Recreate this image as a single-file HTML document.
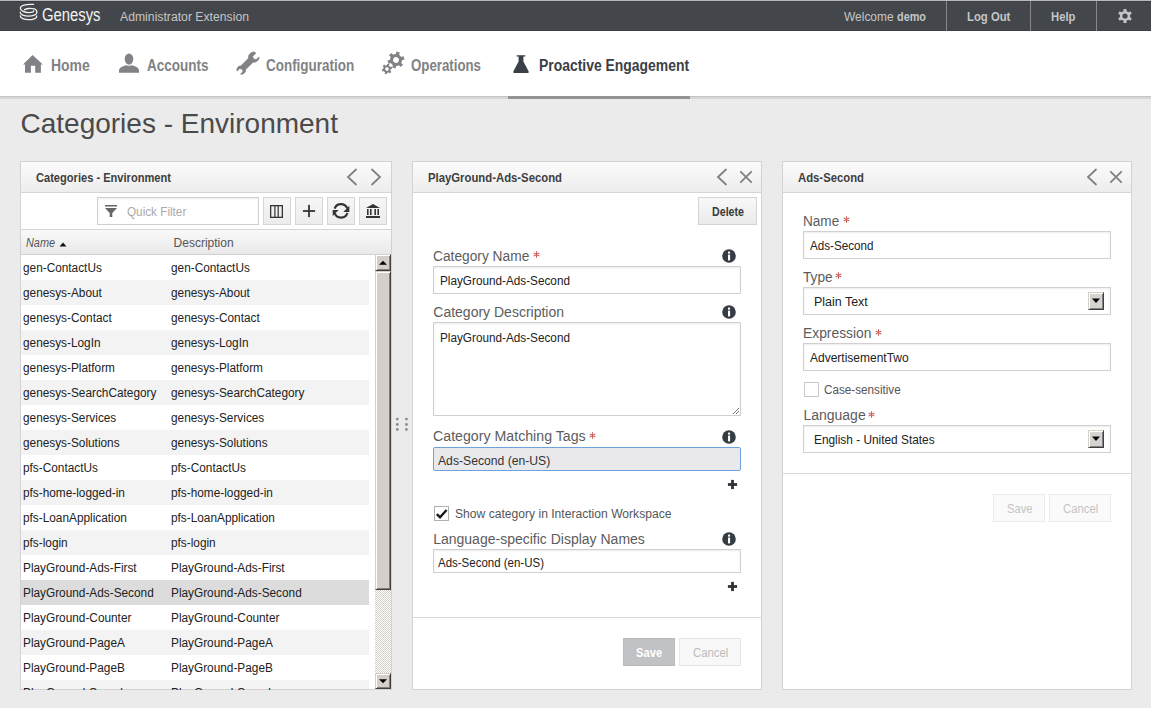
<!DOCTYPE html>
<html><head><meta charset="utf-8">
<style>
*{box-sizing:border-box;margin:0;padding:0}
html,body{width:1151px;height:708px;overflow:hidden;background:#ebebeb;font-family:"Liberation Sans",sans-serif;color:#333;position:relative}
.b{position:absolute}
.t{position:absolute;white-space:nowrap;transform-origin:0 0;font-family:"Liberation Sans",sans-serif}
svg{position:absolute;overflow:visible}
#top{left:0;top:0;width:1151px;height:31px;background:linear-gradient(#3c3d41 0,#3c3d41 1px,#43464a 1px);border-top:1px solid #b9babe;border-bottom:1px solid #3a3c3f}
.sep{top:1px;width:1px;height:30px;background:#85878a}
#nav{left:0;top:31px;width:1151px;height:65px;background:#fff}
#navline{left:0;top:96px;width:1151px;height:3px;background:linear-gradient(#c6c6c6 33%,#d6d6d6 33%)}
#navact{left:508px;top:96px;width:182px;height:3px;background:#939393}
.panel{top:161px;height:529px;background:#fff;border:1px solid #d2d2d2}
.phead{left:0;top:0;right:0;height:31px;background:linear-gradient(#fbfbfb,#ededed);border-bottom:1px solid #d5d5d5}
.inp{background:#fff;border:1px solid #d0d0d0;box-shadow:inset 0 1px 2px rgba(0,0,0,.08)}
.tbtn{top:197px;width:28px;height:28px;background:linear-gradient(#f6f6f6,#ececec);border:1px solid #d6d6d6}
.row{left:1px;width:348px;height:25px}
.alt{background:#f3f3f3}
.w3d{background:#d4d0c8;border-top:1px solid #fff;border-left:1px solid #fff;border-right:1px solid #404040;border-bottom:1px solid #404040;box-shadow:inset -1px -1px 0 #808080}
.dd{background:#d6d4d0;border-top:1px solid #d4d0c8;border-left:1px solid #d4d0c8;border-right:1px solid #404040;border-bottom:1px solid #404040;box-shadow:inset 1px 1px 0 #fff,inset -1px -1px 0 #808080}
</style></head><body>
<!-- top bar -->
<div id="top" class="b"></div>
<div class="b sep" style="left:946px"></div>
<div class="b sep" style="left:1030px"></div>
<div class="b sep" style="left:1096px"></div>
<!-- genesys logo -->
<svg style="left:18px;top:2px" width="22" height="22" viewBox="0 0 708 708">
  <g fill="none" stroke="#f0f0f0" stroke-width="42" stroke-linecap="round">
  <path d="M500 78 C250 60 75 110 75 195 C75 290 220 340 340 340 C450 340 510 320 505 290"/>
  <path d="M205 250 C260 205 420 195 520 225 C600 250 615 300 600 340"/>
  <path d="M72 330 C70 410 200 455 340 455 C480 455 610 415 605 335"/>
  <path d="M72 445 C70 525 200 570 340 570 C480 570 610 530 605 450"/>
  </g>
</svg>
<!-- top gear -->
<svg style="left:1117px;top:8px" width="16" height="16" viewBox="-8 -8 16 16">
  <g fill="#c2c4c6">
    <circle r="5.1"/>
    <rect x="-1.5" y="-7.1" width="3" height="14.2" rx="0.6"/>
    <rect x="-1.5" y="-7.1" width="3" height="14.2" rx="0.6" transform="rotate(60)"/>
    <rect x="-1.5" y="-7.1" width="3" height="14.2" rx="0.6" transform="rotate(120)"/>
  </g>
  <circle r="2.6" fill="#43464a"/>
</svg>
<!-- nav -->
<div id="nav" class="b"></div>
<div id="navline" class="b"></div>
<div id="navact" class="b"></div>
<!-- home -->
<svg style="left:22px;top:54px" width="22" height="20" viewBox="0 0 22 20">
  <path d="M10.6 1 L1 10.6 L3 10.6 L3 18.8 L8.9 18.8 L8.9 11.8 L13.2 11.8 L13.2 18.8 L18.9 18.8 L18.9 10.6 L20.8 10.6 Z" fill="#808285"/>
</svg>
<!-- person -->
<svg style="left:118px;top:52px" width="22" height="22" viewBox="0 0 22 22">
  <ellipse cx="11" cy="7.1" rx="4.3" ry="5.6" fill="#808285"/>
  <path d="M1 20.8 L1 19 C1 16 3.5 14.8 7 13.6 L8.5 13.2 C9.5 14 12.5 14 13.5 13.2 L15 13.6 C18.5 14.8 21 16 21 19 L21 20.8 Z" fill="#808285"/>
</svg>
<!-- wrench -->
<svg style="left:236px;top:51px" width="24" height="24" viewBox="0 0 24 24">
  <path d="M17.8 1 C14.6 1.2 12.2 3.8 12.6 7.2 L4.8 15 C1.8 14.8 0.6 17.4 1 20 L3.8 17.6 L6.4 18.2 L7 20.6 L4.6 23.2 C7.6 23.4 9.8 21.6 9.6 18.6 L17 11.2 C20.4 11.6 23.2 9.2 23 6 L20.2 8.6 L17.4 8 L16.6 5.2 L19.8 2.2 C19.2 1.4 18.6 1 17.8 1 Z" fill="#808285" stroke="#808285" stroke-width="0.8" stroke-linejoin="round"/>
</svg>
<!-- gears -->
<svg style="left:380px;top:50px" width="26" height="26" viewBox="0 0 26 26">
  <g transform="translate(16 10) rotate(15)" fill="#808285">
    <circle r="6"/>
    <rect x="-1.7" y="-8.3" width="3.4" height="16.6"/>
    <rect x="-1.7" y="-8.3" width="3.4" height="16.6" transform="rotate(60)"/>
    <rect x="-1.7" y="-8.3" width="3.4" height="16.6" transform="rotate(120)"/>
    <circle r="2.9" fill="#fff"/>
  </g>
  <g transform="translate(7 19) rotate(15)" fill="#808285">
    <circle r="3.7"/>
    <rect x="-1.1" y="-5.1" width="2.2" height="10.2"/>
    <rect x="-1.1" y="-5.1" width="2.2" height="10.2" transform="rotate(60)"/>
    <rect x="-1.1" y="-5.1" width="2.2" height="10.2" transform="rotate(120)"/>
    <circle r="1.8" fill="#fff"/>
  </g>
</svg>
<!-- flask -->
<svg style="left:512px;top:54px" width="18" height="20" viewBox="0 0 18 20">
  <path d="M5 1.2 L13 1.2 C13.6 1.2 13.6 2.6 13 2.6 L11.4 2.6 L11.4 7.6 L16.6 17.2 C17 18.2 16.6 19 15.6 19 L2.4 19 C1.4 19 1 18.2 1.4 17.2 L6.6 7.6 L6.6 2.6 L5 2.6 C4.4 2.6 4.4 1.2 5 1.2 Z" fill="#3b4046"/>
</svg>

<!-- panel 1 -->
<div class="b panel" style="left:20px;width:372px">
  <div class="b phead"></div>
  <div class="b" style="left:0;top:31px;width:370px;height:37px;border-bottom:1px solid #d6d6d6;background:#fff"></div>
  <div class="b" style="left:0;top:68px;width:370px;height:25px;background:linear-gradient(#f9f9f9,#e9e9e9);border-bottom:1px solid #d0d0d0"></div>
</div>
<div class="b inp" style="left:97px;top:197px;width:162px;height:28px"></div>
<div class="b tbtn" style="left:263px"></div>
<div class="b tbtn" style="left:295px"></div>
<div class="b tbtn" style="left:327px"></div>
<div class="b tbtn" style="left:359px"></div>
<!-- header arrows p1 -->
<svg style="left:345px;top:168px" width="14" height="18" viewBox="0 0 14 18"><path d="M11 1.5 L3 9 L11 16.5" fill="none" stroke="#808080" stroke-width="1.8" stroke-linecap="round"/></svg>
<svg style="left:369px;top:168px" width="14" height="18" viewBox="0 0 14 18"><path d="M3 1.5 L11 9 L3 16.5" fill="none" stroke="#808080" stroke-width="1.8" stroke-linecap="round"/></svg>
<!-- funnel -->
<svg style="left:104px;top:204px" width="14" height="14" viewBox="0 0 14 14"><rect x="1" y="1" width="12" height="1.5" fill="#666"/><path d="M1 4 L13 4 L8.3 9 L8.3 13 L5.7 13 L5.7 9 Z" fill="#666"/></svg>
<!-- columns -->
<svg style="left:269px;top:204px" width="16" height="16" viewBox="0 0 16 16"><rect x="1.65" y="1.65" width="11.7" height="11.7" fill="none" stroke="#333" stroke-width="1.3"/><rect x="5.3" y="2" width="1.2" height="11" fill="#333"/><rect x="8.6" y="2" width="1.2" height="11" fill="#333"/></svg>
<!-- plus -->
<svg style="left:302px;top:204px" width="14" height="14" viewBox="0 0 14 14"><rect x="0.9" y="6.1" width="12.2" height="1.8" fill="#333"/><rect x="6.1" y="0.9" width="1.8" height="12.2" fill="#333"/></svg>
<!-- refresh -->
<svg style="left:332px;top:203px" width="18" height="16" viewBox="0 0 18 16">
  <path d="M2.6 5.6 A6.7 6.7 0 0 1 15.2 5.4" fill="none" stroke="#333" stroke-width="2.1"/>
  <path d="M15.4 10 A6.7 6.7 0 0 1 2.8 10.4" fill="none" stroke="#333" stroke-width="2.1"/>
  <path d="M17.3 2.8 L17.3 8.9 L11.4 8.9 Z" fill="#333"/>
  <path d="M0.7 13 L0.7 6.9 L6.6 6.9 Z" fill="#333"/>
</svg>
<!-- bank -->
<svg style="left:365px;top:203px" width="16" height="16" viewBox="0 0 16 16">
  <path d="M8 1 L15 5 L1 5 Z" fill="#333"/>
  <rect x="2" y="6" width="1.6" height="6" fill="#333"/><rect x="5" y="6" width="1.6" height="6" fill="#333"/><rect x="9.4" y="6" width="1.6" height="6" fill="#333"/><rect x="12.4" y="6" width="1.6" height="6" fill="#333"/>
  <rect x="1" y="13" width="14" height="2" fill="#333"/>
</svg>
<!-- sort triangle -->
<svg style="left:59px;top:242px" width="8" height="5" viewBox="0 0 8 5"><path d="M0.5 4.5 L4 0.5 L7.5 4.5 Z" fill="#111"/></svg>
<!-- rows -->
<div class="b" style="left:20px;top:255px;width:355px;height:434px;overflow:hidden">
  <div class="b row" style="top:25px;background:#f3f3f3"></div>
  <div class="b row" style="top:75px;background:#f3f3f3"></div>
  <div class="b row" style="top:125px;background:#f3f3f3"></div>
  <div class="b row" style="top:175px;background:#f3f3f3"></div>
  <div class="b row" style="top:225px;background:#f3f3f3"></div>
  <div class="b row" style="top:275px;background:#f3f3f3"></div>
  <div class="b row" style="top:325px;background:#dcdcdc"></div>
  <div class="b row" style="top:375px;background:#f3f3f3"></div>
  <div class="b row" style="top:425px;background:#f3f3f3"></div>
</div>
<!-- scrollbar -->
<div class="b" style="left:375px;top:254px;width:16px;height:435px;background-color:#fff;background-image:repeating-conic-gradient(#d4d0c8 0 25%,#fff 0 50%);background-size:2px 2px"></div>
<div class="b dd" style="left:375px;top:254px;width:16px;height:17px;background:#d4d0c8"></div>
<svg style="left:379px;top:259px" width="8" height="8" viewBox="0 0 8 8"><path d="M0 5.8 L4 1.8 L8 5.8 Z" fill="#000"/></svg>
<div class="b dd" style="left:375px;top:271px;width:16px;height:319px;background:#d4d0c8"></div>
<div class="b dd" style="left:375px;top:673px;width:16px;height:16px;background:#d4d0c8"></div>
<svg style="left:379px;top:677px" width="8" height="8" viewBox="0 0 8 8"><path d="M0 2.2 L4 6.2 L8 2.2 Z" fill="#000"/></svg>
<!-- splitter dots -->
<svg style="left:394px;top:416px" width="16" height="16" viewBox="0 0 16 16" fill="#8a8a8a">
  <circle cx="3.3" cy="3.1" r="1.4"/><circle cx="3.3" cy="8.5" r="1.4"/><circle cx="3.3" cy="13.4" r="1.4"/>
  <circle cx="12.4" cy="3.1" r="1.4"/><circle cx="12.4" cy="8.5" r="1.4"/><circle cx="12.4" cy="13.4" r="1.4"/>
</svg>

<!-- panel 2 -->
<div class="b panel" style="left:412px;width:350px">
  <div class="b phead"></div>
  <div class="b" style="left:0;top:455px;width:348px;height:1px;background:#d8d8d8"></div>
</div>
<svg style="left:715px;top:168px" width="14" height="18" viewBox="0 0 14 18"><path d="M11 1.5 L3 9 L11 16.5" fill="none" stroke="#808080" stroke-width="1.8" stroke-linecap="round"/></svg>
<svg style="left:739px;top:170px" width="14" height="14" viewBox="0 0 14 14"><path d="M1.8 1.8 L12.2 12.2 M12.2 1.8 L1.8 12.2" fill="none" stroke="#808080" stroke-width="1.8" stroke-linecap="round"/></svg>
<div class="b" style="left:698px;top:197px;width:59px;height:28px;background:linear-gradient(#f8f8f8,#ebebeb);border:1px solid #d4d4d4"></div>
<div class="b inp" style="left:433px;top:266px;width:308px;height:28px"></div>
<div class="b inp" style="left:433px;top:322px;width:308px;height:94px"></div>
<svg style="left:731px;top:406px" width="9" height="9" viewBox="0 0 9 9"><path d="M8 2 L2 8 M8 5 L5 8" stroke="#777" stroke-width="1"/></svg>
<div class="b" style="left:433px;top:447px;width:308px;height:24px;background:#e9e9eb;border:1px solid #6ea2dc;border-radius:2px"></div>
<div class="b inp" style="left:433px;top:549px;width:308px;height:24px"></div>
<!-- info icons -->
<svg style="left:722px;top:249px" width="14" height="14" viewBox="0 0 14 14"><circle cx="7" cy="7" r="6.8" fill="#353c44"/><rect x="6" y="2.6" width="2.1" height="2" fill="#fff"/><rect x="6" y="5.6" width="2.1" height="5.8" fill="#fff"/></svg>
<svg style="left:722px;top:305px" width="14" height="14" viewBox="0 0 14 14"><circle cx="7" cy="7" r="6.8" fill="#353c44"/><rect x="6" y="2.6" width="2.1" height="2" fill="#fff"/><rect x="6" y="5.6" width="2.1" height="5.8" fill="#fff"/></svg>
<svg style="left:722px;top:430px" width="14" height="14" viewBox="0 0 14 14"><circle cx="7" cy="7" r="6.8" fill="#353c44"/><rect x="6" y="2.6" width="2.1" height="2" fill="#fff"/><rect x="6" y="5.6" width="2.1" height="5.8" fill="#fff"/></svg>
<svg style="left:722px;top:532px" width="14" height="14" viewBox="0 0 14 14"><circle cx="7" cy="7" r="6.8" fill="#353c44"/><rect x="6" y="2.6" width="2.1" height="2" fill="#fff"/><rect x="6" y="5.6" width="2.1" height="5.8" fill="#fff"/></svg>
<!-- asterisks -->
<svg style="left:533px;top:251px" width="7" height="7" viewBox="0 0 7 7"><path d="M3.5 0.3 V6.7 M0.7 1.9 L6.3 5.1 M6.3 1.9 L0.7 5.1" stroke="#c8615e" stroke-width="1.1"/></svg>
<svg style="left:589px;top:432px" width="7" height="7" viewBox="0 0 7 7"><path d="M3.5 0.3 V6.7 M0.7 1.9 L6.3 5.1 M6.3 1.9 L0.7 5.1" stroke="#c8615e" stroke-width="1.1"/></svg>
<!-- plus signs -->
<svg style="left:727px;top:479px" width="11" height="11" viewBox="0 0 11 11"><rect x="0.9" y="4.1" width="9.2" height="2.8" fill="#2f3236"/><rect x="4.1" y="0.9" width="2.8" height="9.2" fill="#2f3236"/></svg>
<svg style="left:727px;top:581px" width="11" height="11" viewBox="0 0 11 11"><rect x="0.9" y="4.1" width="9.2" height="2.8" fill="#2f3236"/><rect x="4.1" y="0.9" width="2.8" height="9.2" fill="#2f3236"/></svg>
<!-- checkbox -->
<div class="b" style="left:434px;top:506px;width:15px;height:15px;border:1px solid #b0b0b0;background:#fff"></div>
<svg style="left:435px;top:508px" width="13" height="11" viewBox="0 0 13 11"><path d="M1.8 6.2 L5 9.2 L11.6 2" fill="none" stroke="#1a1a1a" stroke-width="2.4"/></svg>
<!-- save/cancel p2 -->
<div class="b" style="left:623px;top:638px;width:52px;height:28px;background:#c0c2c5;border:1px solid #b8babd"></div>
<div class="b" style="left:679px;top:638px;width:62px;height:28px;background:#f8f8f8;border:1px solid #e6e6e6"></div>

<!-- panel 3 -->
<div class="b panel" style="left:782px;width:350px">
  <div class="b phead"></div>
  <div class="b" style="left:0;top:311px;width:348px;height:1px;background:#d8d8d8"></div>
</div>
<svg style="left:1085px;top:168px" width="14" height="18" viewBox="0 0 14 18"><path d="M11 1.5 L3 9 L11 16.5" fill="none" stroke="#808080" stroke-width="1.8" stroke-linecap="round"/></svg>
<svg style="left:1109px;top:170px" width="14" height="14" viewBox="0 0 14 14"><path d="M1.8 1.8 L12.2 12.2 M12.2 1.8 L1.8 12.2" fill="none" stroke="#808080" stroke-width="1.8" stroke-linecap="round"/></svg>
<div class="b inp" style="left:803px;top:231px;width:308px;height:28px"></div>
<div class="b inp" style="left:803px;top:287px;width:308px;height:28px"></div>
<div class="b inp" style="left:803px;top:343px;width:308px;height:28px"></div>
<div class="b inp" style="left:803px;top:425px;width:308px;height:28px"></div>
<div class="b dd" style="left:1088px;top:292px;width:16px;height:18px"></div>
<svg style="left:1091px;top:297px" width="10" height="8" viewBox="0 0 10 8"><path d="M1 1.5 L9 1.5 L5 6 Z" fill="#000"/></svg>
<div class="b dd" style="left:1088px;top:430px;width:16px;height:18px"></div>
<svg style="left:1091px;top:435px" width="10" height="8" viewBox="0 0 10 8"><path d="M1 1.5 L9 1.5 L5 6 Z" fill="#000"/></svg>
<div class="b" style="left:804px;top:382px;width:15px;height:15px;border:1px solid #c8c8c8;background:#fff"></div>
<svg style="left:843px;top:216px" width="7" height="7" viewBox="0 0 7 7"><path d="M3.5 0.3 V6.7 M0.7 1.9 L6.3 5.1 M6.3 1.9 L0.7 5.1" stroke="#c8615e" stroke-width="1.1"/></svg>
<svg style="left:835px;top:272px" width="7" height="7" viewBox="0 0 7 7"><path d="M3.5 0.3 V6.7 M0.7 1.9 L6.3 5.1 M6.3 1.9 L0.7 5.1" stroke="#c8615e" stroke-width="1.1"/></svg>
<svg style="left:875px;top:329px" width="7" height="7" viewBox="0 0 7 7"><path d="M3.5 0.3 V6.7 M0.7 1.9 L6.3 5.1 M6.3 1.9 L0.7 5.1" stroke="#c8615e" stroke-width="1.1"/></svg>
<svg style="left:868px;top:411px" width="7" height="7" viewBox="0 0 7 7"><path d="M3.5 0.3 V6.7 M0.7 1.9 L6.3 5.1 M6.3 1.9 L0.7 5.1" stroke="#c8615e" stroke-width="1.1"/></svg>
<div class="b" style="left:993px;top:494px;width:52px;height:28px;background:#fafafa;border:1px solid #ebebeb"></div>
<div class="b" style="left:1049px;top:494px;width:62px;height:28px;background:#fafafa;border:1px solid #ebebeb"></div>
<div class="t" style="left:41.5px;top:5.70px;font-size:18px;line-height:18px;color:#f4f4f4;transform:scaleX(0.823);">Genesys</div>
<div class="t" style="left:120.0px;top:11.40px;font-size:12px;line-height:12px;color:#c4c6c8;transform:scaleX(1.018);">Administrator Extension</div>
<div class="t" style="left:844.0px;top:9.75px;font-size:13px;line-height:13px;color:#c4c6c8;transform:scaleX(0.920);">Welcome</div>
<div class="t" style="left:896.5px;top:9.75px;font-size:13px;font-weight:bold;line-height:13px;color:#c4c6c8;transform:scaleX(0.836);">demo</div>
<div class="t" style="left:966.6px;top:9.75px;font-size:13px;font-weight:bold;line-height:13px;color:#c4c6c8;transform:scaleX(0.871);">Log Out</div>
<div class="t" style="left:1051.0px;top:9.75px;font-size:13px;font-weight:bold;line-height:13px;color:#c4c6c8;transform:scaleX(0.866);">Help</div>
<div class="t" style="left:50.6px;top:57.94px;font-size:15.6px;font-weight:bold;line-height:15.6px;color:#808285;transform:scaleX(0.895);">Home</div>
<div class="t" style="left:146.5px;top:57.94px;font-size:15.6px;font-weight:bold;line-height:15.6px;color:#808285;transform:scaleX(0.864);">Accounts</div>
<div class="t" style="left:265.7px;top:57.94px;font-size:15.6px;font-weight:bold;line-height:15.6px;color:#808285;transform:scaleX(0.862);">Configuration</div>
<div class="t" style="left:410.7px;top:57.94px;font-size:15.6px;font-weight:bold;line-height:15.6px;color:#808285;transform:scaleX(0.850);">Operations</div>
<div class="t" style="left:538.5px;top:57.94px;font-size:15.6px;font-weight:bold;line-height:15.6px;color:#3b4046;transform:scaleX(0.893);">Proactive Engagement</div>
<div class="t" style="left:20.5px;top:109.80px;font-size:28px;line-height:28px;color:#4a4a4a;">Categories - Environment</div>
<div class="t" style="left:36.2px;top:172.38px;font-size:12.5px;font-weight:bold;line-height:12.5px;color:#3e3e3e;transform:scaleX(0.887);">Categories - Environment</div>
<div class="t" style="left:126.5px;top:206.07px;font-size:12.5px;line-height:12.5px;color:#aaa;transform:scaleX(0.938);">Quick Filter</div>
<div class="t" style="left:25.6px;top:236.80px;font-size:12px;font-style:italic;line-height:12px;color:#555;transform:scaleX(0.906);">Name</div>
<div class="t" style="left:173.6px;top:236.80px;font-size:12px;line-height:12px;color:#555;">Description</div>
<div class="t" style="left:23.4px;top:261.50px;font-size:12px;line-height:12px;color:#222;transform:scaleX(0.985);">gen-ContactUs</div>
<div class="t" style="left:171.3px;top:261.50px;font-size:12px;line-height:12px;color:#222;transform:scaleX(0.985);">gen-ContactUs</div>
<div class="t" style="left:23.4px;top:286.50px;font-size:12px;line-height:12px;color:#222;transform:scaleX(0.985);">genesys-About</div>
<div class="t" style="left:171.3px;top:286.50px;font-size:12px;line-height:12px;color:#222;transform:scaleX(0.985);">genesys-About</div>
<div class="t" style="left:23.4px;top:311.50px;font-size:12px;line-height:12px;color:#222;transform:scaleX(0.985);">genesys-Contact</div>
<div class="t" style="left:171.3px;top:311.50px;font-size:12px;line-height:12px;color:#222;transform:scaleX(0.985);">genesys-Contact</div>
<div class="t" style="left:23.4px;top:336.50px;font-size:12px;line-height:12px;color:#222;transform:scaleX(0.985);">genesys-LogIn</div>
<div class="t" style="left:171.3px;top:336.50px;font-size:12px;line-height:12px;color:#222;transform:scaleX(0.985);">genesys-LogIn</div>
<div class="t" style="left:23.4px;top:361.50px;font-size:12px;line-height:12px;color:#222;transform:scaleX(0.985);">genesys-Platform</div>
<div class="t" style="left:171.3px;top:361.50px;font-size:12px;line-height:12px;color:#222;transform:scaleX(0.985);">genesys-Platform</div>
<div class="t" style="left:23.4px;top:386.50px;font-size:12px;line-height:12px;color:#222;transform:scaleX(0.985);">genesys-SearchCategory</div>
<div class="t" style="left:171.3px;top:386.50px;font-size:12px;line-height:12px;color:#222;transform:scaleX(0.985);">genesys-SearchCategory</div>
<div class="t" style="left:23.4px;top:411.50px;font-size:12px;line-height:12px;color:#222;transform:scaleX(0.985);">genesys-Services</div>
<div class="t" style="left:171.3px;top:411.50px;font-size:12px;line-height:12px;color:#222;transform:scaleX(0.985);">genesys-Services</div>
<div class="t" style="left:23.4px;top:436.50px;font-size:12px;line-height:12px;color:#222;transform:scaleX(0.985);">genesys-Solutions</div>
<div class="t" style="left:171.3px;top:436.50px;font-size:12px;line-height:12px;color:#222;transform:scaleX(0.985);">genesys-Solutions</div>
<div class="t" style="left:23.4px;top:461.50px;font-size:12px;line-height:12px;color:#222;transform:scaleX(0.985);">pfs-ContactUs</div>
<div class="t" style="left:171.3px;top:461.50px;font-size:12px;line-height:12px;color:#222;transform:scaleX(0.985);">pfs-ContactUs</div>
<div class="t" style="left:23.4px;top:486.50px;font-size:12px;line-height:12px;color:#222;transform:scaleX(0.985);">pfs-home-logged-in</div>
<div class="t" style="left:171.3px;top:486.50px;font-size:12px;line-height:12px;color:#222;transform:scaleX(0.985);">pfs-home-logged-in</div>
<div class="t" style="left:23.4px;top:511.50px;font-size:12px;line-height:12px;color:#222;transform:scaleX(0.985);">pfs-LoanApplication</div>
<div class="t" style="left:171.3px;top:511.50px;font-size:12px;line-height:12px;color:#222;transform:scaleX(0.985);">pfs-LoanApplication</div>
<div class="t" style="left:23.4px;top:536.50px;font-size:12px;line-height:12px;color:#222;transform:scaleX(0.985);">pfs-login</div>
<div class="t" style="left:171.3px;top:536.50px;font-size:12px;line-height:12px;color:#222;transform:scaleX(0.985);">pfs-login</div>
<div class="t" style="left:23.4px;top:561.50px;font-size:12px;line-height:12px;color:#222;transform:scaleX(0.985);">PlayGround-Ads-First</div>
<div class="t" style="left:171.3px;top:561.50px;font-size:12px;line-height:12px;color:#222;transform:scaleX(0.985);">PlayGround-Ads-First</div>
<div class="t" style="left:23.4px;top:586.50px;font-size:12px;line-height:12px;color:#222;transform:scaleX(0.985);">PlayGround-Ads-Second</div>
<div class="t" style="left:171.3px;top:586.50px;font-size:12px;line-height:12px;color:#222;transform:scaleX(0.985);">PlayGround-Ads-Second</div>
<div class="t" style="left:23.4px;top:611.50px;font-size:12px;line-height:12px;color:#222;transform:scaleX(0.985);">PlayGround-Counter</div>
<div class="t" style="left:171.3px;top:611.50px;font-size:12px;line-height:12px;color:#222;transform:scaleX(0.985);">PlayGround-Counter</div>
<div class="t" style="left:23.4px;top:636.50px;font-size:12px;line-height:12px;color:#222;transform:scaleX(0.985);">PlayGround-PageA</div>
<div class="t" style="left:171.3px;top:636.50px;font-size:12px;line-height:12px;color:#222;transform:scaleX(0.985);">PlayGround-PageA</div>
<div class="t" style="left:23.4px;top:661.50px;font-size:12px;line-height:12px;color:#222;transform:scaleX(0.985);">PlayGround-PageB</div>
<div class="t" style="left:171.3px;top:661.50px;font-size:12px;line-height:12px;color:#222;transform:scaleX(0.985);">PlayGround-PageB</div>
<div class="t" style="left:23.4px;top:686.50px;font-size:12px;line-height:12px;color:#222;transform:scaleX(0.985);">PlayGround-Search</div>
<div class="t" style="left:171.3px;top:686.50px;font-size:12px;line-height:12px;color:#222;transform:scaleX(0.985);">PlayGround-Search</div>
<div class="t" style="left:427.7px;top:172.38px;font-size:12.5px;font-weight:bold;line-height:12.5px;color:#3e3e3e;transform:scaleX(0.906);">PlayGround-Ads-Second</div>
<div class="t" style="left:711.5px;top:205.25px;font-size:13px;font-weight:bold;line-height:13px;color:#3a3a3a;transform:scaleX(0.820);">Delete</div>
<div class="t" style="left:433.3px;top:249.00px;font-size:14px;line-height:14px;color:#5c5c5c;transform:scaleX(0.982);">Category Name</div>
<div class="t" style="left:433.3px;top:305.00px;font-size:14px;line-height:14px;color:#5c5c5c;">Category Description</div>
<div class="t" style="left:433.2px;top:429.40px;font-size:14px;line-height:14px;color:#5c5c5c;transform:scaleX(1.013);">Category Matching Tags</div>
<div class="t" style="left:433.2px;top:531.70px;font-size:14px;line-height:14px;color:#5c5c5c;">Language-specific Display Names</div>
<div class="t" style="left:440.4px;top:275.10px;font-size:12px;line-height:12px;color:#222;transform:scaleX(0.979);">PlayGround-Ads-Second</div>
<div class="t" style="left:440.4px;top:332.00px;font-size:12px;line-height:12px;color:#222;transform:scaleX(0.979);">PlayGround-Ads-Second</div>
<div class="t" style="left:438.0px;top:455.10px;font-size:12px;line-height:12px;color:#333;transform:scaleX(1.014);">Ads-Second (en-US)</div>
<div class="t" style="left:454.5px;top:507.80px;font-size:12px;line-height:12px;color:#555;transform:scaleX(1.009);">Show category in Interaction Workspace</div>
<div class="t" style="left:438.0px;top:557.20px;font-size:12px;line-height:12px;color:#222;transform:scaleX(0.957);">Ads-Second (en-US)</div>
<div class="t" style="left:635.9px;top:646.98px;font-size:12.5px;font-weight:bold;line-height:12.5px;color:#fff;transform:scaleX(0.894);">Save</div>
<div class="t" style="left:692.5px;top:646.98px;font-size:12.5px;line-height:12.5px;color:#bbb;transform:scaleX(0.907);">Cancel</div>
<div class="t" style="left:797.7px;top:172.38px;font-size:12.5px;font-weight:bold;line-height:12.5px;color:#3e3e3e;transform:scaleX(0.905);">Ads-Second</div>
<div class="t" style="left:803.4px;top:214.10px;font-size:14px;line-height:14px;color:#5c5c5c;transform:scaleX(0.969);">Name</div>
<div class="t" style="left:803.4px;top:270.30px;font-size:14px;line-height:14px;color:#5c5c5c;transform:scaleX(0.978);">Type</div>
<div class="t" style="left:803.4px;top:326.10px;font-size:14px;line-height:14px;color:#5c5c5c;transform:scaleX(0.989);">Expression</div>
<div class="t" style="left:803.4px;top:408.00px;font-size:14px;line-height:14px;color:#5c5c5c;">Language</div>
<div class="t" style="left:810.0px;top:240.10px;font-size:12px;line-height:12px;color:#222;transform:scaleX(0.970);">Ads-Second</div>
<div class="t" style="left:814.4px;top:296.10px;font-size:12px;line-height:12px;color:#222;transform:scaleX(1.038);">Plain Text</div>
<div class="t" style="left:810.0px;top:352.30px;font-size:12px;line-height:12px;color:#222;">AdvertisementTwo</div>
<div class="t" style="left:823.9px;top:383.80px;font-size:12px;line-height:12px;color:#555;transform:scaleX(0.975);">Case-sensitive</div>
<div class="t" style="left:814.4px;top:434.10px;font-size:12px;line-height:12px;color:#222;transform:scaleX(0.988);">English - United States</div>
<div class="t" style="left:1006.5px;top:502.98px;font-size:12.5px;line-height:12.5px;color:#c4c4c4;transform:scaleX(0.895);">Save</div>
<div class="t" style="left:1062.5px;top:502.98px;font-size:12.5px;line-height:12.5px;color:#c4c4c4;transform:scaleX(0.907);">Cancel</div>
<div class="b" style="left:0;top:690px;width:1151px;height:18px;background:#ebebeb"></div>
</body></html>
